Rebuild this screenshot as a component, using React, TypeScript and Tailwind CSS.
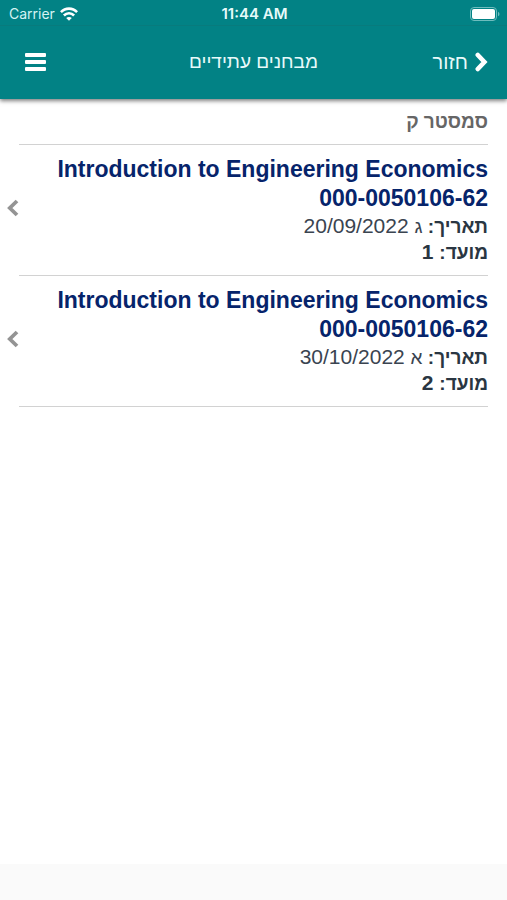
import React from "react";

type Exam = { title: string; code: string; day: string; date: string; sitting: string };

const exams: Exam[] = [
  { title: "Introduction to Engineering Economics", code: "000-0050106-62", day: "ג", date: "20/09/2022", sitting: "1" },
  { title: "Introduction to Engineering Economics", code: "000-0050106-62", day: "א", date: "30/10/2022", sitting: "2" },
];

function StatusBar() {
  return (
    <div
      dir="ltr"
      className="grid h-[26px] grid-cols-3 items-center border-b border-[#087b7d] pr-[7px] pl-[9px] pt-[2px] font-['Inter','Roboto',sans-serif] text-[15px] leading-4"
    >
      <div className="flex items-center gap-[5px]">
        <span className="text-[14px] text-[#d5f3f3]">Carrier</span>
        <svg width="18" height="14" viewBox="0 0 18 14" fill="none" stroke="white" strokeWidth="2.6" aria-hidden="true">
          <path d="M0.9 5.2C5.4 0.4 12.6 0.4 17.1 5.2" />
          <path d="M3.9 8.5C6.8 5.5 11.2 5.5 14.1 8.5" />
          <path d="M9 13.8L6.2 11C7.8 9.5 10.2 9.5 11.8 11Z" fill="white" stroke="none" />
        </svg>
      </div>
      <span className="text-center text-[15px] font-semibold whitespace-nowrap text-[#e6fafa]">11:44 AM</span>
      <svg className="justify-self-end" width="30" height="14" viewBox="0 0 30 14" aria-hidden="true">
        <rect x="0.5" y="0.5" width="26" height="13" rx="3.5" fill="none" stroke="#6fbcbd" />
        <rect x="2" y="2" width="23" height="10" rx="2" fill="white" />
        <path d="M28 4.7C30 5.6 30 8.4 28 9.3Z" fill="#6fbcbd" />
      </svg>
    </div>
  );
}

function NavBar() {
  return (
    <nav className="grid h-[73px] grid-cols-3 items-center px-[19px] pb-[2px] text-[19px] leading-6 text-[#e8fafa]">
      <a href="#back" className="flex items-center gap-[7px] justify-self-start text-xl">
        <svg width="13" height="20" viewBox="0 0 13 20" fill="none" stroke="white" strokeWidth="4.6" strokeLinecap="round" aria-hidden="true">
          <path d="M2.8 3L9.4 10L2.8 17" />
        </svg>
        <span>חזור</span>
      </a>
      <h1 className="text-center whitespace-nowrap">מבחנים עתידיים</h1>
      <button type="button" aria-label="תפריט" className="justify-self-end px-[6px]">
        <svg width="21" height="18" viewBox="0 0 21 18" fill="white" aria-hidden="true">
          <rect width="21" height="4" rx="1" />
          <rect y="7" width="21" height="4" rx="1" />
          <rect y="14" width="21" height="4" rx="1" />
        </svg>
      </button>
    </nav>
  );
}

function ExamRow({ exam }: { exam: Exam }) {
  return (
    <li>
      <a href="#exam" className="flex items-center pr-[19px] pl-[7px]">
        <div className="min-w-0 flex-1 border-b border-[#d2d2d2] py-[10px] text-[21px] leading-[26px] text-[#3a4450]">
          <h3 className="text-[23px] leading-[29px] font-bold text-[#06246b]">
            <bdi className="block text-right" dir="ltr">{exam.title}</bdi>
            <bdi className="block text-right" dir="ltr">{exam.code}</bdi>
          </h3>
          <p>
            <span className="text-[19px] leading-none">
              <b className="text-[#2a3642]">תאריך:</b> {exam.day}
            </span>{" "}
            <bdi dir="ltr">{exam.date}</bdi>
          </p>
          <p className="font-bold text-[#2a3642]">
            <span className="text-[19px] leading-none">מועד:</span> {exam.sitting}
          </p>
        </div>
        <svg className="mb-[5px]" width="12" height="18" viewBox="0 0 12 18" fill="none" stroke="#949494" strokeWidth="3.8" aria-hidden="true">
          <path d="M10 2L2.8 9L10 16" />
        </svg>
      </a>
    </li>
  );
}

export default function App() {
  return (
    <div dir="rtl" className="flex min-h-screen flex-col bg-white font-['Liberation_Sans',Arial,sans-serif]">
      <header className="bg-[#028285] shadow-[0_2px_4px_rgba(0,0,0,0.5)]">
        <StatusBar />
        <NavBar />
      </header>
      <main className="flex-1">
        <h2 className="mx-[19px] border-b border-[#d2d2d2] pt-[10px] pb-[9px] text-[19px] leading-[26px] font-bold text-[#666666]">
          סמסטר ק
        </h2>
        <ul>
          {exams.map((exam) => (
            <ExamRow key={exam.date} exam={exam} />
          ))}
        </ul>
      </main>
      <footer className="h-9 bg-[#fafafa]" />
    </div>
  );
}
